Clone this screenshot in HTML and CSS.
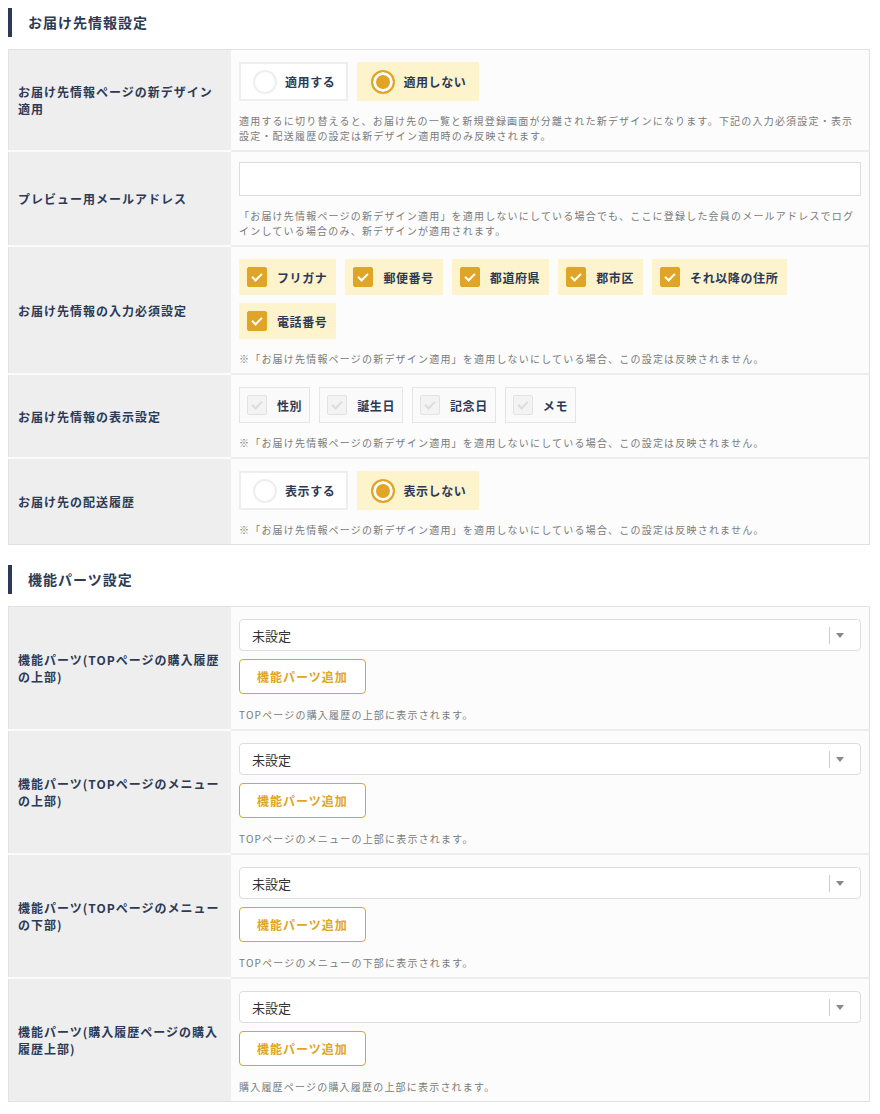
FILE: index.html
```html
<!DOCTYPE html>
<html lang="ja">
<head>
    <meta charset="UTF-8">
    <meta name="viewport" content="width=device-width, initial-scale=1.0">
    <title>お届け先設定</title>
    <link rel="stylesheet" href="styles.css">
</head>
<body>

    <!-- お届け先情報設定 -->
    <section class="setting-section">
        <h2 class="section-title">お届け先情報設定</h2>
        <table class="setting-table">
            <tr>
                <th>お届け先情報ページの新デザイン適用</th>
                <td>
                    <div class="choice-list">
                        <label class="radio-item"><span class="radio-mark"></span>適用する</label>
                        <label class="radio-item is-checked"><span class="radio-mark"></span>適用しない</label>
                    </div>
                    <p class="help">適用するに切り替えると、お届け先の一覧と新規登録画面が分離された新デザインになります。下記の入力必須設定・表示設定・配送履歴の設定は新デザイン適用時のみ反映されます。</p>
                </td>
            </tr>
            <tr>
                <th>プレビュー用メールアドレス</th>
                <td>
                    <input type="text" class="text-input">
                    <p class="help">「お届け先情報ページの新デザイン適用」を適用しないにしている場合でも、ここに登録した会員のメールアドレスでログインしている場合のみ、新デザインが適用されます。</p>
                </td>
            </tr>
            <tr>
                <th>お届け先情報の入力必須設定</th>
                <td>
                    <div class="choice-list">
                        <label class="check-item is-checked"><span class="check-mark"></span>フリガナ</label>
                        <label class="check-item is-checked"><span class="check-mark"></span>郵便番号</label>
                        <label class="check-item is-checked"><span class="check-mark"></span>都道府県</label>
                        <label class="check-item is-checked"><span class="check-mark"></span>郡市区</label>
                        <label class="check-item is-checked"><span class="check-mark"></span>それ以降の住所</label>
                        <label class="check-item is-checked"><span class="check-mark"></span>電話番号</label>
                    </div>
                    <p class="help">※「お届け先情報ページの新デザイン適用」を適用しないにしている場合、この設定は反映されません。</p>
                </td>
            </tr>
            <tr>
                <th>お届け先情報の表示設定</th>
                <td>
                    <div class="choice-list">
                        <label class="check-item"><span class="check-mark"></span>性別</label>
                        <label class="check-item"><span class="check-mark"></span>誕生日</label>
                        <label class="check-item"><span class="check-mark"></span>記念日</label>
                        <label class="check-item"><span class="check-mark"></span>メモ</label>
                    </div>
                    <p class="help">※「お届け先情報ページの新デザイン適用」を適用しないにしている場合、この設定は反映されません。</p>
                </td>
            </tr>
            <tr>
                <th>お届け先の配送履歴</th>
                <td>
                    <div class="choice-list">
                        <label class="radio-item"><span class="radio-mark"></span>表示する</label>
                        <label class="radio-item is-checked"><span class="radio-mark"></span>表示しない</label>
                    </div>
                    <p class="help">※「お届け先情報ページの新デザイン適用」を適用しないにしている場合、この設定は反映されません。</p>
                </td>
            </tr>
        </table>
    </section>

    <!-- 機能パーツ設定 -->
    <section class="setting-section">
        <h2 class="section-title">機能パーツ設定</h2>
        <table class="setting-table">
            <tr>
                <th>機能パーツ(TOPページの購入履歴の上部)</th>
                <td>
                    <div class="select-box"><span>未設定</span><i class="select-arrow"></i></div>
                    <button class="add-button">機能パーツ追加</button>
                    <p class="help">TOPページの購入履歴の上部に表示されます。</p>
                </td>
            </tr>
            <tr>
                <th>機能パーツ(TOPページのメニューの上部)</th>
                <td>
                    <div class="select-box"><span>未設定</span><i class="select-arrow"></i></div>
                    <button class="add-button">機能パーツ追加</button>
                    <p class="help">TOPページのメニューの上部に表示されます。</p>
                </td>
            </tr>
            <tr>
                <th>機能パーツ(TOPページのメニューの下部)</th>
                <td>
                    <div class="select-box"><span>未設定</span><i class="select-arrow"></i></div>
                    <button class="add-button">機能パーツ追加</button>
                    <p class="help">TOPページのメニューの下部に表示されます。</p>
                </td>
            </tr>
            <tr>
                <th>機能パーツ(購入履歴ページの購入履歴上部)</th>
                <td>
                    <div class="select-box"><span>未設定</span><i class="select-arrow"></i></div>
                    <button class="add-button">機能パーツ追加</button>
                    <p class="help">購入履歴ページの購入履歴の上部に表示されます。</p>
                </td>
            </tr>
        </table>
    </section>

</body>
</html>
```

FILE: styles.css
```css
body {
    font-family: "Noto Sans CJK JP", "Noto Sans", sans-serif;
    color: #2c3a56;
    margin: 0;
    padding: 8px 10px 8px 8px;
    background-color: #fff;
}

.setting-section + .setting-section {
    margin-top: 20px;
}

.section-title {
    margin: 0 0 12px;
    padding-left: 16px;
    border-left: 4px solid #2c3a56;
    font-size: 14px;
    font-weight: bold;
    letter-spacing: 1px;
    line-height: 29px;
}

.setting-table {
    width: 100%;
    border-collapse: collapse;
    border: 1px solid #e2e2e2;
}
.setting-table th {
    width: 204px;
    padding: 8px 9px;
    background-color: #eeeeee;
    border-bottom: 2px solid #fbfbfb;
    font-size: 12px;
    font-weight: bold;
    letter-spacing: 1px;
    line-height: 17px;
    text-align: left;
    vertical-align: middle;
}
.setting-table td {
    padding: 12px 8px 7px;
    background-color: #fcfcfc;
    border-bottom: 2px solid #ededed;
    vertical-align: top;
}
.setting-table tr:last-child th,
.setting-table tr:last-child td {
    border-bottom: none;
}

.help {
    margin: 12px 0 0;
    font-size: 10px;
    line-height: 15px;
    letter-spacing: 1.2px;
    color: #7a7a7a;
}

/* ラジオ・チェックボックス */
.choice-list {
    display: flex;
    flex-wrap: wrap;
    gap: 8px 9px;
}

.radio-item,
.check-item {
    display: flex;
    align-items: center;
    box-sizing: border-box;
    font-size: 12px;
    font-weight: bold;
    letter-spacing: 0.6px;
    white-space: nowrap;
}

.radio-item {
    height: 39px;
    padding: 0 11px 0 12px;
    gap: 8px;
    border: 2px solid #eeeeee;
    background-color: #fff;
}
.radio-item.is-checked {
    border-color: #fdf3cd;
    background-color: #fdf3cd;
}
.radio-mark {
    width: 24px;
    height: 24px;
    box-sizing: border-box;
    border-radius: 50%;
    border: 2px solid #eeeeee;
    background-color: #fff;
}
.radio-item.is-checked .radio-mark {
    border-color: #e0a526;
    box-shadow: inset 0 0 0 3px #fff;
    background-color: #e0a526;
}

.check-item {
    height: 36px;
    padding: 0 7px;
    gap: 10px;
    border: 1px solid #e5e5e5;
    background-color: #fafafa;
}
.check-item.is-checked {
    padding-right: 8px;
    border-color: #fdf3cd;
    background-color: #fdf3cd;
}
.check-mark {
    position: relative;
    width: 20px;
    height: 20px;
    box-sizing: border-box;
    border: 1px solid #e2e2e2;
    border-radius: 2px;
    background-color: #f3f3f3;
}
.check-mark::after {
    content: "";
    position: absolute;
    left: 6px;
    top: 3px;
    width: 4px;
    height: 8px;
    border-right: 2px solid #dcdcdc;
    border-bottom: 2px solid #dcdcdc;
    transform: rotate(45deg);
}
.check-item.is-checked .check-mark {
    border-color: #e0a526;
    background-color: #e0a526;
}
.check-item.is-checked .check-mark::after {
    border-color: #fff;
}

/* 入力欄 */
.text-input {
    display: block;
    width: 100%;
    height: 34px;
    box-sizing: border-box;
    margin-top: -2px;
    border: 1px solid #dddddd;
    background-color: #fff;
}

.select-box {
    position: relative;
    display: flex;
    align-items: center;
    height: 32px;
    box-sizing: border-box;
    padding-left: 12px;
    border: 1px solid #dddddd;
    border-radius: 4px;
    background-color: #fff;
    font-size: 13px;
    color: #333;
}
.select-box::before {
    content: "";
    position: absolute;
    right: 30px;
    top: 7px;
    width: 1px;
    height: 17px;
    background-color: #cccccc;
}
.select-arrow {
    position: absolute;
    right: 16px;
    top: 13px;
    border-left: 4px solid transparent;
    border-right: 4px solid transparent;
    border-top: 5px solid #888;
}

.add-button {
    display: block;
    margin-top: 8px;
    width: 127px;
    height: 35px;
    border: 1px solid #e0a526;
    border-radius: 4px;
    background-color: #fff;
    color: #e0a526;
    font-family: inherit;
    font-size: 12px;
    font-weight: bold;
    letter-spacing: 1px;
}
.add-button + .help {
    margin-top: 13px;
}
```
